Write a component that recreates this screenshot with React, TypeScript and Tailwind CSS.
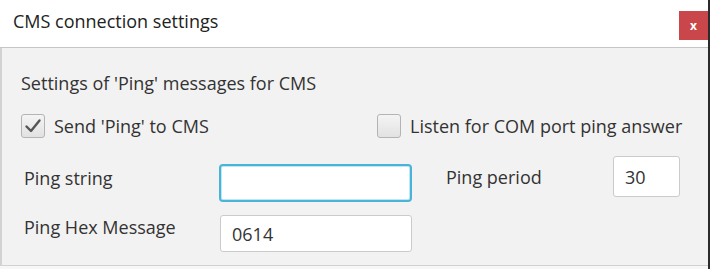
import { useState } from "react";

const font = { fontFamily: '"Open Sans", "Noto Sans", sans-serif' };

const CheckBox = ({ checked, label }: { checked: boolean; label: string }) => {
  return (
    <label className="flex shrink-0 items-center gap-[9px] whitespace-nowrap text-[18px] leading-[24px] text-[#333]">
      <span className="flex h-[24px] w-[24px] shrink-0 items-center justify-center rounded-[3px] border border-[#b4b4b4] bg-gradient-to-b from-[#f4f4f4] to-[#e2e2e2]">
        {checked && (
          <svg width="18" height="16" viewBox="0 0 18 16">
            <path
              d="M2.5 8.5 L7 13 L15.5 2.5"
              fill="none"
              stroke="#555"
              strokeWidth="2.4"
              strokeLinecap="round"
              strokeLinejoin="round"
            />
          </svg>
        )}
      </span>
      {label}
    </label>
  );
};

const App = () => {
  const [ping, setPing] = useState("");
  const [hex, setHex] = useState("0614");
  const [period, setPeriod] = useState("30");

  return (
    <div
      className="flex h-[269px] w-[710px] flex-col overflow-hidden border-r-2 border-[#2b2b2b] bg-white"
      style={font}
    >
      {/* title bar */}
      <div className="flex h-[48px] shrink-0 items-start justify-between border-b border-[#c6c6c6] bg-white pl-[13px]">
        <h1 className="mt-[9px] text-[18px] leading-[24px] text-[#222]">CMS connection settings</h1>
        <button className="mt-[11px] flex h-[29px] w-[29px] items-center justify-center bg-[#c9474a] text-[12px] font-bold leading-none text-white">
          x
        </button>
      </div>

      {/* body */}
      <div className="flex flex-1 flex-col border-b border-l-2 border-[#d2d2d2] bg-[#f2f2f2] pl-[19px] pr-[28px]">
        <p className="mt-[23px] h-[24px] whitespace-nowrap text-[18px] leading-[24px] text-[#333]">
          Settings of 'Ping' messages for CMS
        </p>

        <div className="mt-[19px] flex h-[24px] items-center">
          <div className="w-[356px] shrink-0">
            <CheckBox checked label="Send 'Ping' to CMS" />
          </div>
          <CheckBox checked={false} label="Listen for COM port ping answer" />
        </div>

        <div className="mt-[18px] flex items-start pl-[3px]">
          <span className="mt-[10px] w-[195px] shrink-0 whitespace-nowrap text-[18px] leading-[24px] text-[#333]">Ping string</span>
          <input
            value={ping}
            onChange={(e) => setPing(e.target.value)}
            className="mt-[8px] h-[38px] w-[193px] shrink-0 rounded-[4px] border-2 border-[#49b3d9] bg-white px-[11px] text-[18px] text-[#333] shadow-[inset_0_0_0_1px_#bfe6f3] outline-none"
          />
          <span className="ml-[34px] mt-[9px] whitespace-nowrap text-[18px] leading-[24px] text-[#333]">Ping period</span>
          <input
            value={period}
            onChange={(e) => setPeriod(e.target.value)}
            className="ml-auto h-[41px] w-[67px] shrink-0 rounded-[3px] border border-[#cbcbcb] bg-white px-[11px] text-[18px] text-[#333] outline-none"
          />
        </div>

        <div className="mt-[13px] flex items-start pl-[3px]">
          <span className="w-[196px] shrink-0 whitespace-nowrap text-[18px] leading-[24px] text-[#333]">Ping Hex Message</span>
          <input
            value={hex}
            onChange={(e) => setHex(e.target.value)}
            className="h-[37px] w-[192px] shrink-0 rounded-[3px] border border-[#cbcbcb] bg-white px-[11px] text-[18px] text-[#333] outline-none"
          />
        </div>
      </div>
      <div className="h-[3px] shrink-0 bg-[#f7f7f7]" />
    </div>
  );
};

export default App;
